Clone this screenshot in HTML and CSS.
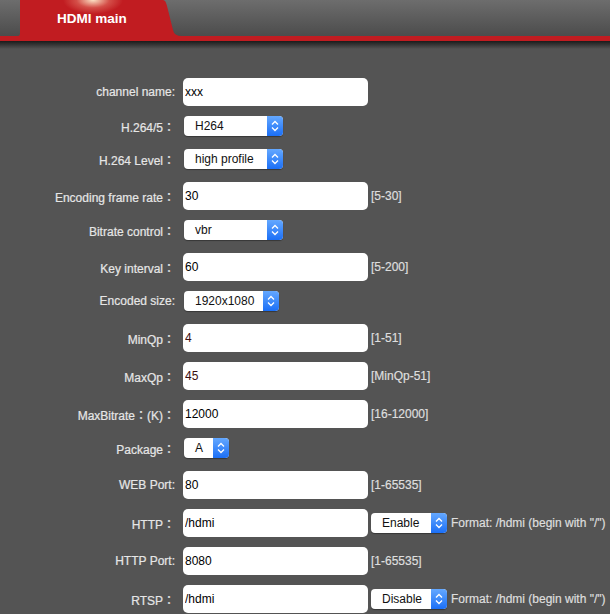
FILE: index.html
```html
<!DOCTYPE html>
<html lang="en">
<head>
    <meta charset="UTF-8">
    <meta name="viewport" content="width=device-width, initial-scale=1.0">
    <title>HDMI main</title>
    <link rel="stylesheet" href="styles.css">
</head>
<body>
    <div class="header">
        <div class="tab">HDMI main</div>
    </div>
    <div class="header-shadow"></div>

    <div class="form">
        <div class="row">
            <label>channel name:</label>
            <input type="text" value="xxx">
        </div>

        <!-- Dropdowns are drawn by hand so they look the same on every system -->
        <div class="row sel">
            <label>H.264/5：</label>
            <div class="select w99"><span class="value">H264</span><span class="arrow"><svg width="16" height="20" viewBox="0 0 16 20"><polyline points="5,8.5 8,5.5 11,8.5"/><polyline points="5,11.5 8,14.5 11,11.5"/></svg></span></div>
        </div>

        <div class="row sel">
            <label>H.264 Level：</label>
            <div class="select w99"><span class="value">high profile</span><span class="arrow"><svg width="16" height="20" viewBox="0 0 16 20"><polyline points="5,8.5 8,5.5 11,8.5"/><polyline points="5,11.5 8,14.5 11,11.5"/></svg></span></div>
        </div>

        <div class="row">
            <label>Encoding frame rate：</label>
            <input type="text" value="30">
            <span class="hint">[5-30]</span>
        </div>

        <div class="row sel">
            <label>Bitrate control：</label>
            <div class="select w99"><span class="value">vbr</span><span class="arrow"><svg width="16" height="20" viewBox="0 0 16 20"><polyline points="5,8.5 8,5.5 11,8.5"/><polyline points="5,11.5 8,14.5 11,11.5"/></svg></span></div>
        </div>

        <div class="row">
            <label>Key interval：</label>
            <input type="text" value="60">
            <span class="hint">[5-200]</span>
        </div>

        <div class="row sel">
            <label>Encoded size:</label>
            <div class="select w95"><span class="value">1920x1080</span><span class="arrow"><svg width="16" height="20" viewBox="0 0 16 20"><polyline points="5,8.5 8,5.5 11,8.5"/><polyline points="5,11.5 8,14.5 11,11.5"/></svg></span></div>
        </div>

        <div class="row">
            <label>MinQp：</label>
            <input type="text" class="qp" value="4">
            <span class="hint">[1-51]</span>
        </div>

        <div class="row">
            <label>MaxQp：</label>
            <input type="text" class="qp" value="45">
            <span class="hint">[MinQp-51]</span>
        </div>

        <div class="row">
            <label>MaxBitrate：(K)：</label>
            <input type="text" value="12000">
            <span class="hint">[16-12000]</span>
        </div>

        <div class="row sel">
            <label>Package：</label>
            <div class="select w45"><span class="value">A</span><span class="arrow"><svg width="16" height="20" viewBox="0 0 16 20"><polyline points="5,8.5 8,5.5 11,8.5"/><polyline points="5,11.5 8,14.5 11,11.5"/></svg></span></div>
        </div>

        <div class="row">
            <label>WEB Port:</label>
            <input type="text" value="80">
            <span class="hint">[1-65535]</span>
        </div>

        <div class="row">
            <label>HTTP：</label>
            <input type="text" value="/hdmi">
            <div class="select w76 inline"><span class="value">Enable</span><span class="arrow"><svg width="16" height="20" viewBox="0 0 16 20"><polyline points="5,8.5 8,5.5 11,8.5"/><polyline points="5,11.5 8,14.5 11,11.5"/></svg></span></div>
            <span class="hint format">Format: /hdmi (begin with "/")</span>
        </div>

        <div class="row">
            <label>HTTP Port:</label>
            <input type="text" value="8080">
            <span class="hint">[1-65535]</span>
        </div>

        <div class="row">
            <label>RTSP：</label>
            <input type="text" value="/hdmi">
            <div class="select w76 inline"><span class="value">Disable</span><span class="arrow"><svg width="16" height="20" viewBox="0 0 16 20"><polyline points="5,8.5 8,5.5 11,8.5"/><polyline points="5,11.5 8,14.5 11,11.5"/></svg></span></div>
            <span class="hint format">Format: /hdmi (begin with "/")</span>
        </div>
    </div>
</body>
</html>
```

FILE: styles.css
```css
html {
    overflow: hidden;
}

body {
    margin: 0;
    background-color: #545454;
    font-family: "Liberation Sans", Arial, "Noto Sans CJK JP", sans-serif;
    font-size: 12px;
}

/* top bar with the red tab */
.header {
    height: 36px;
    background: linear-gradient(to bottom, #6d6d6d, #4c4c4c);
    border-bottom: 5px solid #c11c21;
}

.tab {
    width: 164px;
    height: 36px;
    margin-left: 18px;
    padding-left: 39px;
    box-sizing: border-box;
    display: flex;
    align-items: center;
    color: white;
    font-weight: bold;
    font-size: 13.5px;
    background:
        radial-gradient(ellipse 30px 14px at 75px 0, rgba(255, 236, 205, 0.95), rgba(235, 140, 120, 0.45) 55%, rgba(193, 28, 33, 0) 100%),
        #c11c21;
    clip-path: path('M0 36 Q2 36 2 33 L2 0 L145 0 C147 0 148 2 149 6 L155 30 Q156 36 164 36 Z');
}

.header-shadow {
    height: 8px;
    background: linear-gradient(to bottom, #1b1b1b, #545454);
}

.form {
    padding-top: 29px;
}

.row {
    display: flex;
    align-items: center;
    margin-bottom: 10px;
}

.row.sel {
    margin-bottom: 13px;
}

.row label {
    width: 175px;
    margin-right: 8px;
    text-align: right;
    color: #e6e6e6;
    -webkit-text-stroke: 0.2px #e6e6e6;
    flex-shrink: 0;
}

input {
    width: 185px;
    height: 28px;
    box-sizing: border-box;
    padding: 0 2px;
    border: none;
    border-radius: 5px;
    background-color: white;
    font-family: inherit;
    font-size: 12px;
    color: #000;
    outline: none;
}

input.qp {
    color: #3c0f0f;
}

.hint {
    margin-left: 3px;
    color: #dedede;
    -webkit-text-stroke: 0.2px #dedede;
}

.hint.format {
    margin-left: 4px;
}

.select {
    display: flex;
    height: 20px;
    margin-left: 1px;
    background-color: white;
    border-radius: 4px;
    box-shadow: 0 1px 1px rgba(0, 0, 0, 0.35);
}

.select.inline {
    margin-left: 3px;
}

.select .value {
    flex: 1;
    padding-left: 11px;
    line-height: 20px;
    color: #111;
    white-space: nowrap;
}

.select .arrow {
    width: 16px;
    height: 20px;
    border-radius: 0 4px 4px 0;
    background: linear-gradient(to bottom, #64a8ff, #1b6ff6);
}

.select .arrow svg {
    display: block;
}

.select .arrow polyline {
    fill: none;
    stroke: white;
    stroke-width: 1.3;
}

.w99 { width: 99px; }
.w95 { width: 95px; }
.w76 { width: 76px; }
.w45 { width: 45px; }
```
